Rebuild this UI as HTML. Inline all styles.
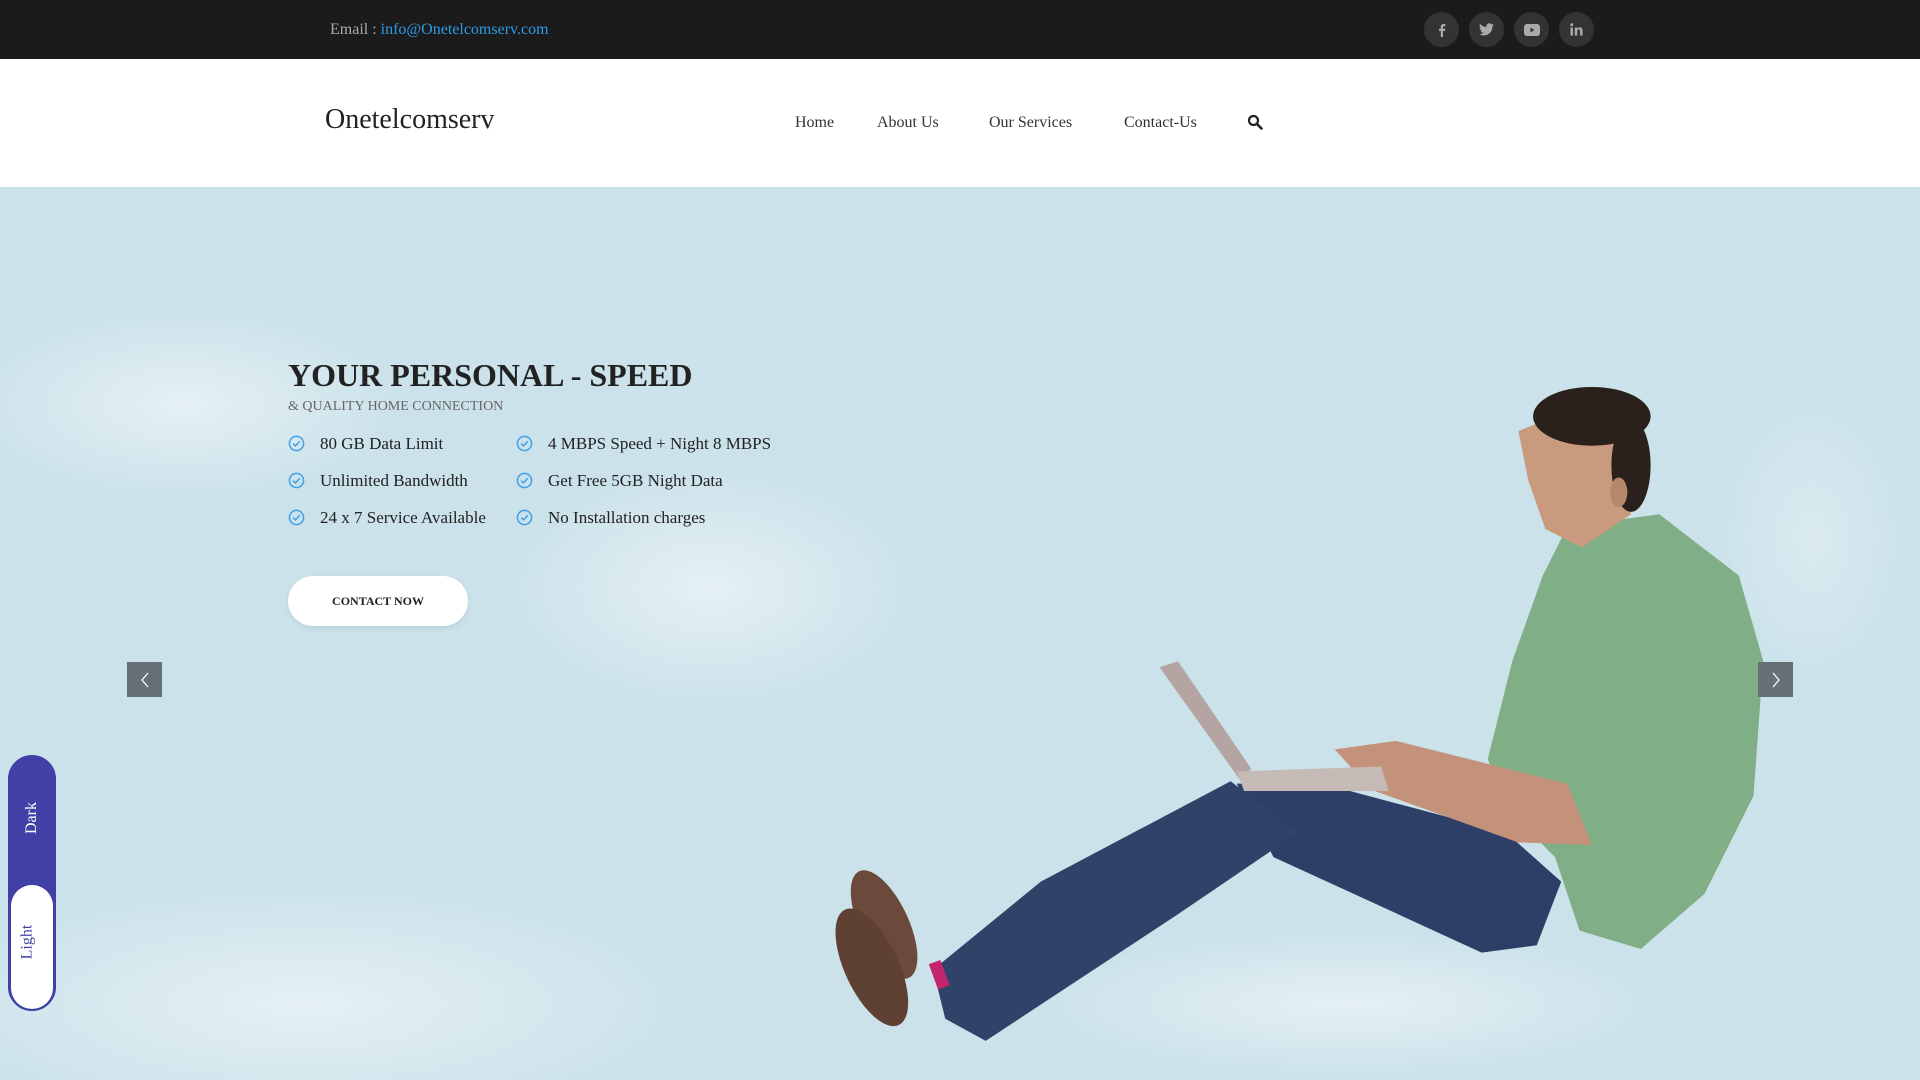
<!DOCTYPE html>
<html><head><meta charset="utf-8"><style>
*{margin:0;padding:0;box-sizing:border-box}
body{width:1920px;height:1080px;overflow:hidden;font-family:"Liberation Serif",serif;background:#cbe2ea;position:relative}
.top{position:absolute;left:0;top:0;width:1920px;height:59px;background:#1b1b1b}
.email{position:absolute;left:330px;top:21px;font-size:16px;color:#aaa}
.email a{color:#2c9be6;text-decoration:none}
.soc{position:absolute;top:12px;width:35px;height:35px;border-radius:50%;background:#333;display:flex;align-items:center;justify-content:center}
.nav{position:absolute;left:0;top:59px;width:1920px;height:128px;background:#fff}
.logo{position:absolute;left:325px;top:104px;font-size:28px;color:#222}
.ni{position:absolute;top:114px;font-size:16px;color:#333}
h1{position:absolute;left:288px;top:357px;font-size:32px;font-weight:bold;color:#222;white-space:nowrap}
.sub{position:absolute;left:288px;top:399px;font-size:14px;color:#666}
.li{position:absolute;font-size:17px;color:#222;white-space:nowrap}
.ck{position:absolute;width:17px;height:17px}
.btn{position:absolute;left:288px;top:576px;width:180px;height:50px;border-radius:25px;background:#fff;font-size:12px;font-weight:bold;color:#222;display:flex;align-items:center;justify-content:center;box-shadow:0 2px 6px rgba(0,0,0,.08)}
.arr{position:absolute;top:662px;width:35px;height:35px;background:#657075;display:flex;align-items:center;justify-content:center}
.tog{position:absolute;left:8px;top:755px;width:48px;height:256px;border-radius:24px;background:#4040a6;border:2px solid #4040a6;overflow:hidden}
.tog .l{position:absolute;left:1px;bottom:0;width:42px;height:124px;border-radius:22px;background:#fff}
.vt{position:absolute;transform:rotate(-90deg);font-size:16px;white-space:nowrap}
</style></head><body>
<svg style="position:absolute;left:0;top:0" width="1920" height="1080" viewBox="0 0 1568 882">
<defs>
<radialGradient id="c"><stop offset="0" stop-color="#fff" stop-opacity=".5"/><stop offset="1" stop-color="#fff" stop-opacity="0"/></radialGradient>
</defs>
<ellipse cx="150" cy="330" rx="180" ry="80" fill="url(#c)"/>
<ellipse cx="580" cy="480" rx="170" ry="100" fill="url(#c)"/>
<ellipse cx="250" cy="820" rx="320" ry="100" fill="url(#c)"/>
<ellipse cx="1100" cy="820" rx="260" ry="60" fill="url(#c)"/>
<ellipse cx="1480" cy="440" rx="80" ry="120" fill="url(#c)" opacity=".6"/>
<!-- man -->
<polygon points="1010,640 1080,640 1230,680 1275,720 1255,772 1210,778 1110,732 1040,700" fill="#2d3f66"/>
<polygon points="1005,638 1060,680 960,748 805,850 772,832 762,792 850,720" fill="#2f4268"/>
<polygon points="1280,430 1355,420 1420,470 1440,540 1432,650 1392,730 1340,775 1290,760 1270,700 1230,660 1215,620 1235,540 1260,470" fill="#80ae86"/>
<polygon points="1090,612 1140,605 1280,640 1300,690 1240,688 1120,645" fill="#c4927a"/>
<polygon points="947,545 962,540 1022,628 1012,636" fill="#b5a5a2"/>
<polygon points="1010,630 1128,626 1134,646 1016,646" fill="#c6bab6"/>
<polygon points="1240,352 1290,332 1322,362 1332,420 1292,447 1262,432 1248,392" fill="#c99a7e"/>
<ellipse cx="1300" cy="340" rx="48" ry="24" fill="#2a211c"/>
<ellipse cx="1332" cy="380" rx="16" ry="38" fill="#2a211c"/>
<ellipse cx="1322" cy="402" rx="7" ry="12" fill="#b7876c"/>
<ellipse cx="722" cy="755" rx="20" ry="48" transform="rotate(-25 722 755)" fill="#6b4a3b"/>
<ellipse cx="712" cy="790" rx="22" ry="52" transform="rotate(-25 712 790)" fill="#5f4133"/>
<rect x="762" y="785" width="10" height="22" fill="#c2246e" transform="rotate(-20 767 796)"/>
</svg>
<div class="top"></div>
<div class="email">Email : <a>info@Onetelcomserv.com</a></div>
<div class="soc" style="left:1424px"><svg width="14" height="14" viewBox="0 0 14 14"><path d="M8 14V8h2l.4-2.3H8V4.4c0-.7.2-1.1 1.1-1.1h1.3V1.2C10 1.1 9.4 1 8.7 1 7 1 5.8 2 5.8 3.9v1.8H4V8h1.8v6z" fill="#aaa"/></svg></div>
<div class="soc" style="left:1469px"><svg width="15" height="13" viewBox="0 0 24 20"><path d="M24 2.4a10 10 0 01-2.8.8A5 5 0 0023.3.5a10 10 0 01-3.1 1.2A4.9 4.9 0 0011.8 6 14 14 0 011.7.9a4.9 4.9 0 001.5 6.6 5 5 0 01-2.2-.6 4.9 4.9 0 003.9 4.8 5 5 0 01-2.2.1 4.9 4.9 0 004.6 3.4A10 10 0 010 17.3 14 14 0 007.5 19.5c9 0 14-7.5 14-14v-.6A10 10 0 0024 2.4z" fill="#aaa"/></svg></div>
<div class="soc" style="left:1514px"><svg width="16" height="12" viewBox="0 0 16 12"><rect width="16" height="12" rx="3" fill="#aaa"/><path d="M6.5 3.5v5l4-2.5z" fill="#333"/></svg></div>
<div class="soc" style="left:1559px"><svg width="13" height="13" viewBox="0 0 13 13"><rect x="0.5" y="4.5" width="2.5" height="8" fill="#aaa"/><circle cx="1.75" cy="1.8" r="1.5" fill="#aaa"/><path d="M4.8 4.5h2.4v1.1c.4-.7 1.3-1.3 2.5-1.3 2.2 0 2.8 1.4 2.8 3.3v4.9H10V8.1c0-1-.2-1.8-1.2-1.8s-1.5.7-1.5 1.8v4.4H4.8z" fill="#aaa"/></svg></div>
<div class="nav"></div>
<div class="logo">Onetelcomserv</div>
<div class="ni" style="left:795px">Home</div>
<div class="ni" style="left:877px">About Us</div>
<div class="ni" style="left:989px">Our Services</div>
<div class="ni" style="left:1124px">Contact-Us</div>
<svg style="position:absolute;left:1247px;top:114px" width="16" height="16" viewBox="0 0 16 16"><circle cx="6.5" cy="6.5" r="4.5" fill="none" stroke="#222" stroke-width="2.2"/><path d="M10 10l4.5 4.5" stroke="#222" stroke-width="2.6" stroke-linecap="round"/></svg>
<h1>YOUR PERSONAL - SPEED</h1>
<div class="sub">&amp; QUALITY HOME CONNECTION</div>
<svg width="0" height="0" style="position:absolute"><symbol id="ck" viewBox="0 0 18 18"><circle cx="9" cy="9" r="7.5" fill="none" stroke="#3fa0ea" stroke-width="1.6"/><path d="M5.5 9.2l2.4 2.4 4.6-5" fill="none" stroke="#3fa0ea" stroke-width="1.6"/></symbol></svg>
<svg class="ck" style="left:288px;top:435px"><use href="#ck"/></svg><div class="li" style="left:320px;top:434px">80 GB Data Limit</div>
<svg class="ck" style="left:288px;top:472px"><use href="#ck"/></svg><div class="li" style="left:320px;top:471px">Unlimited Bandwidth</div>
<svg class="ck" style="left:288px;top:509px"><use href="#ck"/></svg><div class="li" style="left:320px;top:508px">24 x 7 Service Available</div>
<svg class="ck" style="left:516px;top:435px"><use href="#ck"/></svg><div class="li" style="left:548px;top:434px">4 MBPS Speed + Night 8 MBPS</div>
<svg class="ck" style="left:516px;top:472px"><use href="#ck"/></svg><div class="li" style="left:548px;top:471px">Get Free 5GB Night Data</div>
<svg class="ck" style="left:516px;top:509px"><use href="#ck"/></svg><div class="li" style="left:548px;top:508px">No Installation charges</div>
<div class="btn">CONTACT NOW</div>
<div class="arr" style="left:127px"><svg width="12" height="18" viewBox="0 0 12 18"><path d="M9 2L3 9l6 7" fill="none" stroke="#fff" stroke-width="1.3"/></svg></div>
<div class="arr" style="left:1758px"><svg width="12" height="18" viewBox="0 0 12 18"><path d="M3 2l6 7-6 7" fill="none" stroke="#fff" stroke-width="1.3"/></svg></div>
<div class="tog"><div class="vt" style="color:#fff;left:6px;top:52px">Dark</div><div class="l"><div class="vt" style="color:#4040a6;left:-1px;top:48px">Light</div></div></div>
</body></html>
